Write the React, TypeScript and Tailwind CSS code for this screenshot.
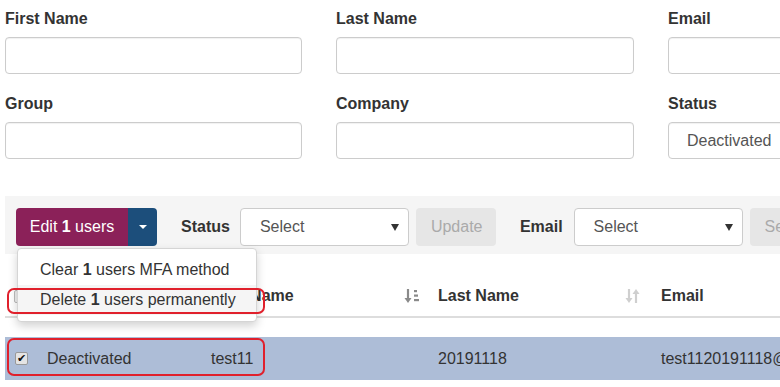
import React from "react";

const SortActive = () => (
  <svg width="16" height="16" viewBox="0 0 16 16" className="shrink-0">
    <path d="M4 1 V12" stroke="#8a8a8a" strokeWidth="2.2" />
    <path d="M0.5 10 L4 15 L7.5 10 Z" fill="#8a8a8a" />
    <rect x="10" y="2" width="3" height="2.2" fill="#8a8a8a" />
    <rect x="10" y="6.5" width="4" height="2.2" fill="#8a8a8a" />
    <rect x="10" y="11" width="5" height="2.2" fill="#8a8a8a" />
  </svg>
);

const SortIdle = () => (
  <svg width="15" height="16" viewBox="0 0 15 16" className="shrink-0">
    <path d="M4 1 V12" stroke="#cfcfcf" strokeWidth="2.2" />
    <path d="M0.5 10 L4 15 L7.5 10 Z" fill="#cfcfcf" />
    <path d="M11 4 V15" stroke="#cfcfcf" strokeWidth="2.2" />
    <path d="M7.5 6 L11 1 L14.5 6 Z" fill="#cfcfcf" />
  </svg>
);

const Field = ({ label, value }: { label: string; value?: string }) => (
  <div>
    <div className="font-bold leading-5 mb-2">{label}</div>
    <div className="h-[37px] border border-[#ccc] rounded-[4px] flex items-center pl-[18px] text-[#555] shadow-[inset_0_1px_1px_rgba(0,0,0,0.06)]">
      {value}
    </div>
  </div>
);

const Select = () => (
  <div className="w-[169px] h-[38px] bg-white border border-[#ccc] rounded-[4px] flex items-center justify-between pl-[19px] pr-[9px] text-[#555]">
    <span>Select</span>
    <span className="w-0 h-0 border-x-[4px] border-x-transparent border-t-[7px] border-t-[#333]" />
  </div>
);

const App = () => {
  return (
    <div className="w-[780px] h-[387px] overflow-hidden bg-white relative font-['Liberation_Sans',Arial,sans-serif] text-[16px] text-[#333]">
      <div className="w-[1000px] pl-[5px]">
        <div className="pt-[9px] grid grid-cols-[297px_298px_297px] gap-x-[34px] gap-y-[20px]">
          <Field label="First Name" />
          <Field label="Last Name" />
          <Field label="Email" />
          <Field label="Group" />
          <Field label="Company" />
          <Field label="Status" value="Deactivated" />
        </div>

        <div className="mt-[37px] bg-[#f5f5f5] pt-3 pb-2 pl-[11px] flex items-center">
          <div className="relative flex">
            <div className="h-[38px] w-[112px] bg-[#8b2159] text-white rounded-l-[4px] flex items-center justify-center">
              Edit&nbsp;<b>1</b>&nbsp;users
            </div>
            <div className="h-[38px] w-[29px] bg-[#1c4e7b] rounded-r-[4px] flex items-center justify-center">
              <span className="w-0 h-0 border-x-[4px] border-x-transparent border-t-[4px] border-t-white" />
            </div>
            <div className="absolute left-[1px] top-[40px] w-[240px] bg-white border border-[#d5d5d5] rounded-[4px] shadow-[0_4px_10px_rgba(0,0,0,0.18)] py-[6px] z-10 whitespace-nowrap">
              <div className="h-[30px] flex items-center pl-[22px]">
                Clear&nbsp;<b>1</b>&nbsp;users MFA method
              </div>
              <div className="h-[30px] flex items-center pl-[22px] bg-[#f5f5f5]">
                Delete&nbsp;<b>1</b>&nbsp;users permanently
              </div>
            </div>
          </div>
          <span className="font-bold ml-[24px] mr-[10px]">Status</span>
          <Select />
          <div className="ml-[7px] w-[80px] h-[38px] bg-[#e6e6e6] rounded-[4px] flex items-center pl-[15px] text-[#aaa]">
            Update
          </div>
          <span className="font-bold ml-[24px] mr-[11px]">Email</span>
          <Select />
          <div className="ml-[7px] w-[80px] h-[38px] bg-[#e6e6e6] rounded-[4px] flex items-center pl-[15px] text-[#aaa]">
            Select
          </div>
        </div>

        <div className="mt-[22px] h-[42px] border-b-2 border-[#ddd] flex items-center font-bold">
          <div className="w-[32px] pl-[9px]">
            <div className="w-[12px] h-[13px] border border-[#bbb] rounded-[2px] bg-[#eee]" />
          </div>
          <div className="w-[164px] pl-[10px]">Status</div>
          <div className="w-[227px] pl-[10px] pr-[8px] flex items-center justify-between">
            <span>First Name</span>
            <SortActive />
          </div>
          <div className="w-[223px] pl-[10px] pr-[11px] flex items-center justify-between">
            <span>Last Name</span>
            <SortIdle />
          </div>
          <div className="pl-[10px]">Email</div>
        </div>

        <div className="mt-[19px] h-[43px] bg-[#adbdd7] flex items-center">
          <div className="w-[32px] pl-[10px]">
            <div className="w-[13px] h-[13px] rounded-[2px] bg-[#e4e4e4] border border-[#999] flex items-center justify-center text-[11px] leading-none text-[#111]">
              ✔
            </div>
          </div>
          <div className="w-[164px] pl-[10px]">Deactivated</div>
          <div className="w-[227px] pl-[10px]">test11</div>
          <div className="w-[223px] pl-[10px]">20191118</div>
          <div className="pl-[10px]">test1120191118@example.com</div>
        </div>
      </div>

      <div className="absolute left-[7px] top-[288px] w-[258px] h-[26px] border-2 border-[#e0202c] rounded-[7px] z-20" />
      <div className="absolute left-[7px] top-[338px] w-[258px] h-[38px] border-2 border-[#e0202c] rounded-[7px] z-20" />
    </div>
  );
};

export default App;
